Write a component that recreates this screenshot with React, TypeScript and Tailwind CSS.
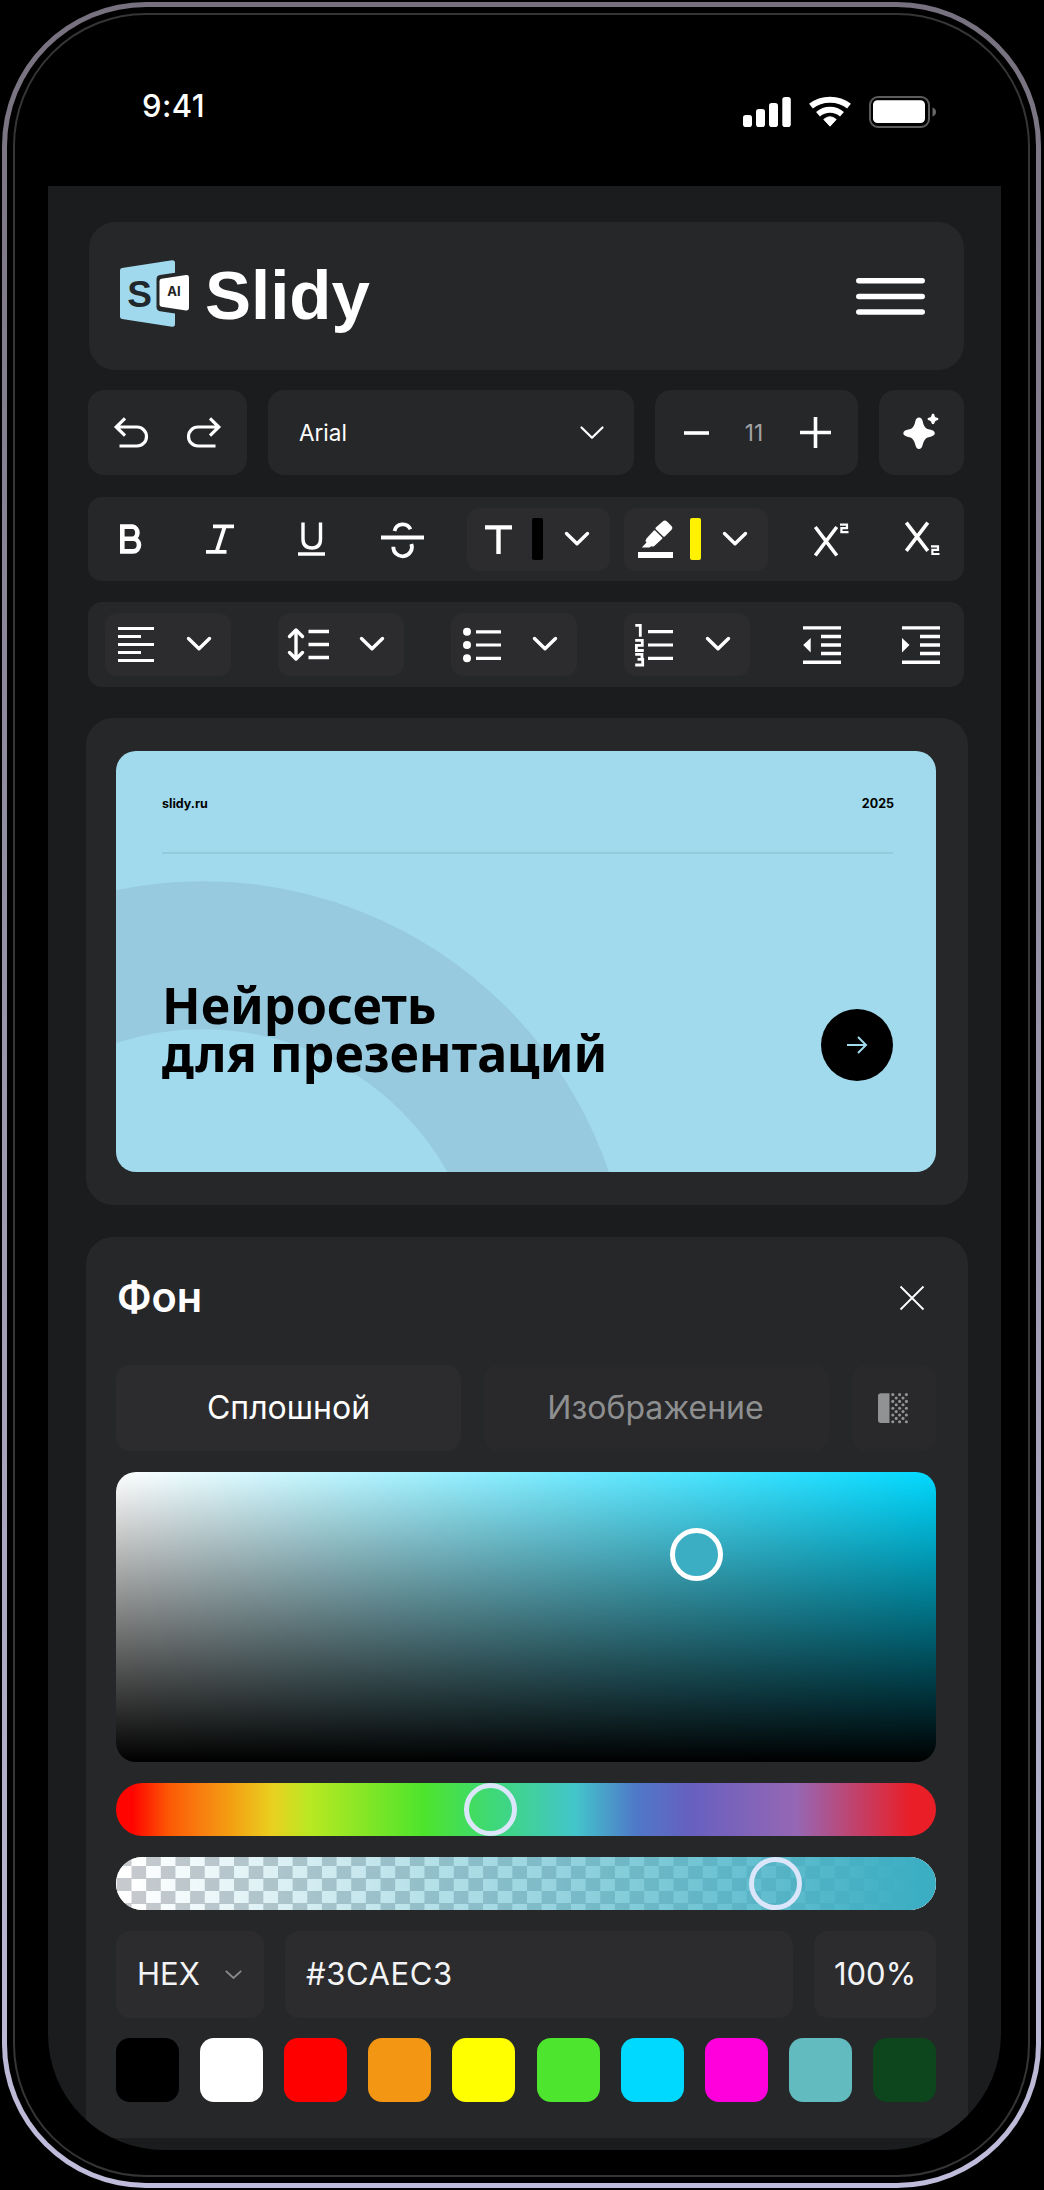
import type { ReactNode } from "react";

type GlyphProps = { w: number; h: number; sw?: number; className?: string; children: ReactNode };

function Glyph({ w, h, sw = 3, className = "", children }: GlyphProps) {
  return (
    <svg
      width={w}
      height={h}
      viewBox={`0 0 ${w} ${h}`}
      fill="none"
      stroke="currentColor"
      strokeWidth={sw}
      className={`block shrink-0 overflow-visible ${className}`}
    >
      {children}
    </svg>
  );
}

function Chevron({ sw = 3.4, className = "" }: { sw?: number; className?: string }) {
  return (
    <Glyph w={24} h={14} sw={sw} className={className}>
      <path d="M1.5 1.5L12 11.8L22.5 1.5" strokeLinecap="round" strokeLinejoin="round" />
    </Glyph>
  );
}

function StatusBar() {
  return (
    <div className="flex h-[171px] items-start pl-[127px] pt-[80px]">
      <span className="-mt-[7px] w-[65px] whitespace-nowrap text-[31px] leading-[36px] font-medium tracking-[0.4px]">9:41</span>
      <div className="ml-[536px] flex items-start">
        <Glyph w={48} h={31} sw={0} className="mt-[2px]">
          <g fill="currentColor">
            <rect x="0" y="18" width="9" height="12" rx="2.8" />
            <rect x="13" y="12" width="9" height="18" rx="2.8" />
            <rect x="26" y="6" width="9" height="24" rx="2.8" />
            <rect x="39.3" y="0" width="8.5" height="30" rx="2.8" />
          </g>
        </Glyph>
        <Glyph w={42} h={30} sw={6} className="ml-[18px] mt-[2px]">
          <path d="M2 9.2C12.6 .6 29.4 .6 40 9.2" />
          <path d="M9 17.2C16 11.2 26 11.2 33 17.2" />
          <path d="M14.8 22.4Q21 17.2 27.2 22.4L21 29.2Z" fill="currentColor" strokeWidth="1" strokeLinejoin="round" />
        </Glyph>
        <Glyph w={68} h={32} sw={2} className="ml-[18px] mt-px">
          <rect x="1" y="1" width="59" height="30" rx="8" stroke="#5c5c5c" />
          <rect x="4" y="4.3" width="52" height="22.7" rx="4.5" fill="white" stroke="none" />
          <path d="M63.5 11.3Q67 13 67 16Q67 19 63.5 20.7Z" fill="#666" stroke="none" />
        </Glyph>
      </div>
    </div>
  );
}

function Logo() {
  return (
    <div className="flex items-start">
      <svg width="69" height="67" viewBox="0 0 69 67" className="mt-[38px] block">
        <path d="M2 8L52 .2Q55 0 55 2.8V12.8L40 15Q36.5 15.7 36.5 19V47Q36.5 50.5 40 51.3L55 53.5V64Q55 67 52 66.7L2 59Q0 58.6 0 56.5V10.5Q0 8.4 2 8Z" fill="#a0d9ed" />
        <path d="M41.5 18.7L66 15.1Q69 14.7 69 17.5V48Q69 50.8 66 50.4L41.5 46.8Q39.5 46.5 39.5 44.3V21.3Q39.5 19 41.5 18.7Z" fill="#fff" />
        <text x="7.2" y="47.3" fontSize="37" fontWeight="700" fill="#20282c" fontFamily="Liberation Sans, sans-serif">S</text>
        <text x="54" y="35.8" fontSize="13" fontWeight="700" fill="#222" fontFamily="Inter, sans-serif" textAnchor="middle">AI</text>
      </svg>
      <span className="ml-[16px] mt-[35px] font-['Liberation_Sans',sans-serif] text-[69px] leading-[78px] font-bold">Slidy</span>
    </div>
  );
}

function TopRow() {
  return (
    <div className="ml-[40px] mt-[20px] flex h-[85px] w-[876px] gap-[21px]">
      <div className="flex w-[159px] items-start rounded-[16px] bg-[#262729] pl-[26px] pt-[27px]">
        <Glyph w={34} h={31} sw={3.2}>
          <path d="M11 1.4L2.2 10L11 18.6M2.5 10H23A9.5 9.5 0 0 1 23 29H5.5" />
        </Glyph>
        <Glyph w={34} h={31} sw={3.2} className="ml-[39px]">
          <path d="M23 1.4L31.8 10L23 18.6M31.5 10H11A9.5 9.5 0 0 0 11 29H28.5" />
        </Glyph>
      </div>
      <div className="flex w-[366px] items-center rounded-[16px] bg-[#262729] pl-[31px] pr-[30px]">
        <span className="flex-1 text-[22.5px]">Arial</span>
        <Chevron sw={2.2} />
      </div>
      <div className="flex w-[203px] items-center rounded-[16px] bg-[#262729] pl-[29px]">
        <Glyph w={25} h={4} sw={3.6}>
          <path d="M0 2H25" />
        </Glyph>
        <span className="ml-[34px] w-[22px] text-center text-[22.5px] text-[#a3a3a5]">11</span>
        <Glyph w={31} h={31} sw={3.6} className="ml-[35px]">
          <path d="M0 15.5H31M15.5 0V31" />
        </Glyph>
      </div>
      <div className="flex flex-1 items-start rounded-[16px] bg-[#262729] pl-[24px] pt-[23px]">
        <Glyph w={37} h={37} sw={0}>
          <g fill="currentColor">
            <path d="M16 4.5Q18.8 4.5 19.6 8Q20.8 14.6 24.5 16Q31.8 17 31.8 20.2Q31.8 23.3 24.5 24.5Q21 26 19.6 32Q18.7 36 16 36Q13.3 36 12.4 32Q11 26 7.5 24.5Q.3 23.3 .3 20.2Q.3 17 7.5 16Q11.2 14.6 12.4 8Q13.2 4.5 16 4.5Z" />
            <path d="M30 .5Q31.5 .5 31.8 3.4Q32.4 4.4 33.4 4.6Q35.5 4.8 35.5 6Q35.5 7.2 33.4 7.5Q32.4 7.8 31.8 9Q31.4 11.2 30 11.2Q28.6 11.2 28.2 9Q27.6 7.8 26.6 7.5Q24.5 7.2 24.5 6Q24.5 4.8 26.6 4.6Q27.6 4.4 28.2 3.4Q28.5 .5 30 .5Z" />
          </g>
        </Glyph>
      </div>
    </div>
  );
}

function FormatRow() {
  return (
    <div className="ml-[40px] mt-[22px] flex h-[84px] w-[876px] items-center rounded-[14px] bg-[#262729]">
      <Glyph w={22} h={30} sw={4.6} className="ml-[32px]">
        <path d="M2.3 2.6H12.5A6 6.2 0 0 1 12.5 14.8H2.3M2.3 14.8H13A6 6.3 0 0 1 13 27.4H2.3M2.3 .3V29.7" />
      </Glyph>
      <Glyph w={28} h={30} sw={3.8} className="ml-[64px]">
        <path d="M7 2.3H28M0 27.8H20.5M18.8 2.3L10.6 27.8" />
      </Glyph>
      <Glyph w={27} h={34} sw={3.4} className="ml-[64px]">
        <path d="M5 .5V17Q5 26 14 26Q22.5 26 22.5 17V.5M0 32H27" />
      </Glyph>
      <Glyph w={43} h={35} sw={3.8} className="ml-[56px]">
        <path d="M0 15.5H43M13.5 9A8.5 8.5 0 0 1 29.5 7.2M12.3 24.7A9.3 9.3 0 1 0 30.4 22" />
      </Glyph>
      <div className="ml-[43px] flex h-[63px] w-[143px] items-center rounded-[12px] bg-[#2c2c2e]">
        <Glyph w={27} h={29} sw={4.4} className="ml-[18px]">
          <path d="M0 2.4H27M13.5 2V29" />
        </Glyph>
        <div className="ml-[20px] h-[42px] w-[11px] rounded-[2px] bg-black" />
        <Chevron className="ml-[22px]" />
      </div>
      <div className="ml-[14px] flex h-[63px] w-[144px] items-center rounded-[12px] bg-[#2c2c2e]">
        <Glyph w={36} h={38} sw={0} className="ml-[14px]">
          <g fill="currentColor">
            <path d="M24.7 1.5Q26.8-.6 29 1.5L33.5 6Q35.3 8 33.3 10L26.8 16.5Q26 17.2 25.2 16.4L17.8 9.2Q17 8.4 17.8 7.6Z" />
            <path d="M15.9 10.5Q16.5 10 17.1 10.5L24.2 17.5Q24.8 18.1 24.2 18.8L16.3 26Q15 27 13.2 26.2L11.5 27.6H3.8L8.5 22.5Q6.8 20.5 8.5 18.5Z" />
            <rect x="0" y="32" width="35" height="6" />
          </g>
        </Glyph>
        <div className="ml-[16px] h-[42px] w-[11px] rounded-[2px] bg-[#fff200]" />
        <Chevron className="ml-[22px]" />
      </div>
      <Glyph w={36} h={34} sw={3.6} className="ml-[46px] mt-[2px]">
        <path d="M1.3 32.5L22.8 4M1.3 4L22.8 32.5" />
        <path d="M26 1.6H33V5.1H27.4V9.1H34.5" strokeWidth="2.2" />
      </Glyph>
      <Glyph w={36} h={34} sw={3.6} className="ml-[55px]">
        <path d="M1.3 28.9L22.8 .6M1.3 .6L22.8 28.9" />
        <path d="M26 24.4H33V27.9H27.4V32H34.5" strokeWidth="2.2" />
      </Glyph>
    </div>
  );
}

function Dropdown({ children, first = false }: { children: ReactNode; first?: boolean }) {
  return (
    <div className={`flex h-[63px] w-[126px] items-center rounded-[12px] bg-[#2c2c2e] ${first ? "ml-[17px]" : "ml-[47px]"}`}>
      <div className="flex w-[82px] justify-start pl-[12px]">{children}</div>
      <Chevron className="mb-[2px]" />
    </div>
  );
}

function ParagraphRow() {
  return (
    <div className="ml-[40px] mt-[21px] flex h-[85px] w-[876px] items-center rounded-[14px] bg-[#262729]">
      <Dropdown first>
        <Glyph w={36} h={37} sw={3.2} className="ml-px">
          <path d="M0 2.5H36M0 10.5H23M0 18.5H36M0 26.5H23M0 34.5H36" />
        </Glyph>
      </Dropdown>
      <Dropdown>
        <Glyph w={41} h={33} sw={3.4} className="-ml-[2px]">
          <path d="M8 2V31" />
          <path d="M1.5 8.5L8 2L14.5 8.5M1.5 24.5L8 31L14.5 24.5" strokeLinecap="round" strokeLinejoin="round" />
          <path d="M20.5 3.5H41M20.5 16.5H41M20.5 29.5H41" />
        </Glyph>
      </Dropdown>
      <Dropdown>
        <Glyph w={38} h={34} sw={3.2}>
          <g fill="currentColor" stroke="none">
            <circle cx="4" cy="3.8" r="4" />
            <circle cx="4" cy="17" r="4" />
            <circle cx="4" cy="30.3" r="4" />
          </g>
          <path d="M13 3.8H38M13 17H38M13 30.3H38" />
        </Glyph>
      </Dropdown>
      <Dropdown>
        <Glyph w={38} h={44} sw={3.2} className="-ml-px">
          <path d="M13 8.7H38M13 22H38M13 35.3H38" />
          <g strokeWidth="2.8">
            <path d="M.3 2.3H5.3V13.7" />
            <path d="M.2 17.3H7.3V22.3H1.4V27.5H8.8" />
            <path d="M.2 31.3H7V36.3H2.5M6.5 36.3H7.7V42H.2" />
          </g>
        </Glyph>
      </Dropdown>
      <Glyph w={38} h={38} sw={3.4} className="ml-[53px]">
        <path d="M0 1.9H38M18 10.5H38M18 19H38M18 27.5H38M0 36.2H38" />
        <path d="M7.7 12V26.5L.2 19Z" fill="currentColor" stroke="none" />
      </Glyph>
      <Glyph w={38} h={38} sw={3.4} className="ml-[61px]">
        <path d="M0 1.9H38M18 10.5H38M18 19H38M18 27.5H38M0 36.2H38" />
        <path d="M0 12V26.5L7.5 19Z" fill="currentColor" stroke="none" />
      </Glyph>
    </div>
  );
}

function SlidePreview() {
  return (
    <div className="ml-[38px] mt-[31px] h-[487px] w-[882px] rounded-[27px] bg-[#252729] px-[30px] pt-[33px]">
      <div className="relative h-[421px] w-[820px] overflow-hidden rounded-[20px] bg-[#a1daed] text-black">
        <svg className="absolute inset-0" width="820" height="421" viewBox="0 0 820 421">
          <circle cx="87" cy="559" r="354.7" fill="none" stroke="#98cadf" strokeWidth="148" />
        </svg>
        <div className="relative pl-[46px] pr-[43px] pt-[43px]">
          <div className="flex justify-between text-[12.5px] leading-[20px] font-bold">
            <span>slidy.ru</span>
            <span className="-mr-[1px]">2025</span>
          </div>
          <div className="mt-[38px] h-[2px] bg-[#95c9dc]" />
          <div className="mt-[127px] flex items-start justify-between">
            <h1 className="whitespace-nowrap font-['Noto_Sans',sans-serif] text-[50.2px] leading-[48px] font-bold">
              Нейросеть
              <br />
              для презентаций
            </h1>
            <button className="mt-[28px] flex h-[72px] w-[72px] items-center justify-center rounded-full bg-black text-[#a1daed]">
              <Glyph w={20} h={18} sw={2}>
                <path d="M0 9H19M11 1L19 9L11 17" />
              </Glyph>
            </button>
          </div>
        </div>
      </div>
    </div>
  );
}

function OpacityIcon() {
  const dots: [number, number][] = [];
  for (let r = 0; r < 9; r++) {
    for (let c = r % 2; c < 5; c += 2) dots.push([14.8 + c * 3.4, 1.6 + r * 3.4]);
  }
  return (
    <Glyph w={30} h={31} sw={0}>
      <path d="M3 .2H11.5V30H3Q0 30 0 27V3Q0 .2 3 .2Z" fill="#909294" />
      {dots.map(([x, y]) => (
        <circle key={`${x}-${y}`} cx={x} cy={y} r="1.55" fill="#929496" />
      ))}
    </Glyph>
  );
}

const swatches = [
  "bg-black",
  "bg-white",
  "bg-[#ff0000]",
  "bg-[#f39614]",
  "bg-[#ffff00]",
  "bg-[#4de52d]",
  "bg-[#00d9ff]",
  "bg-[#ff00dc]",
  "bg-[#62bbbf]",
  "bg-[#0d461d]",
];

function BackgroundPanel() {
  return (
    <div className="ml-[38px] mt-[32px] h-[901px] w-[882px] rounded-t-[27px] bg-[#262729] pl-[30px] pr-[32px]">
      <div className="flex h-[128px] items-start justify-between pl-px pt-[33px]">
        <h2 className="text-[41.5px] leading-[54px] font-semibold">Фон</h2>
        <Glyph w={24} h={24} sw={1.8} className="mr-[12px] mt-[16px]">
          <path d="M.5 .5L23.5 23.5M23.5 .5L.5 23.5" />
        </Glyph>
      </div>

      <div className="flex h-[86px] gap-[23px] text-[32px]">
        <div className="flex w-[345px] items-center justify-center rounded-[14px] bg-[#2c2c2e]">Сплошной</div>
        <div className="flex w-[345px] items-center justify-center rounded-[14px] bg-[#29292b] pr-[2px] text-[#8e8f90]">Изображение</div>
        <div className="flex w-[84px] items-center justify-center rounded-[14px] bg-[#29292b] pr-[2px]">
          <OpacityIcon />
        </div>
      </div>

      <div className="relative mt-[21px] h-[290px] rounded-[20px] bg-[linear-gradient(to_bottom,transparent,#000),linear-gradient(to_right,#fff,#00d9ff)]">
        <div className="absolute left-[554px] top-[56px] h-[53px] w-[53px] rounded-full border-[5px] border-white bg-[#3caec3]" />
      </div>

      <div className="relative mt-[21px] h-[53px] rounded-full bg-[linear-gradient(to_right,#ff0400_2%,#fc5a05_6.5%,#f88010_10.6%,#f39f12_14%,#eacf20_19%,#b9e822_23.6%,#4de42c_37.5%,#3ed975_45.6%,#43c5cb_56%,#4f78c8_63.5%,#6660c0_70%,#9667b4_83%,#ea1e27_97%)]">
        <div className="absolute left-[348px] top-0 h-[53px] w-[53px] rounded-full border-[5px] border-[#dbe6fa]" />
      </div>

      <div className="relative mt-[21px] h-[53px] overflow-hidden rounded-full bg-white">
        <div className="absolute inset-0 bg-[repeating-conic-gradient(#fff_0_25%,#c6c9cd_0_50%)] bg-size-[29.3px_25px] bg-position-[15.5px_9px]" />
        <div className="absolute inset-0 bg-[linear-gradient(to_right,rgba(60,174,195,0)_2%,rgba(60,174,195,1)_98%)]" />
        <div className="absolute left-[633px] top-0 h-[53px] w-[53px] rounded-full border-[5px] border-[#dbe6fa]" />
      </div>

      <div className="mt-[21px] flex h-[87px] gap-[21px] text-[31px] text-[#f4f4f6]">
        <div className="flex w-[148px] items-center rounded-[14px] bg-[#2c2c2e] pl-[21px]">
          <span className="w-[88px]">HEX</span>
          <Glyph w={17} h={9} sw={1.8} className="text-[#8b8b8d]">
            <path d="M.8 .8L8.5 8L16.2 .8" />
          </Glyph>
        </div>
        <div className="flex flex-1 items-center rounded-[14px] bg-[#2c2c2e] pl-[21px] tracking-[0.6px]">#3CAEC3</div>
        <div className="flex w-[122px] items-center justify-center rounded-[14px] bg-[#2c2c2e]">100%</div>
      </div>

      <div className="mt-[20px] flex justify-between">
        {swatches.map((color) => (
          <div key={color} className={`h-[64px] w-[63px] rounded-[14px] ${color}`} />
        ))}
      </div>
    </div>
  );
}

export default function App() {
  return (
    <div className="h-[2190px] w-[1044px] overflow-hidden bg-black p-[2px] font-['Inter',sans-serif] text-white">
      <div className="h-[2186px] w-[1039px] rounded-[144px] bg-linear-to-b from-[#77717f] to-[#bfbddb] p-[5px]">
        <div className="h-full rounded-[139px] bg-black p-[6px]">
          <div className="h-full rounded-[133px] border-2 border-[#353535]">
            <StatusBar />
            <main className="ml-[33px] h-[1964px] w-[953px] overflow-hidden rounded-b-[116px] bg-[#1b1c1d] pt-[36px]">
              <header className="ml-[41px] flex h-[148px] w-[875px] items-start justify-between rounded-[26px] bg-[#262729] pl-[31px] pr-[39px]">
                <Logo />
                <Glyph w={69} h={38} sw={5.5} className="mt-[56px]">
                  <path d="M2.8 2.8H66.2M2.8 18.4H66.2M2.8 33.9H66.2" strokeLinecap="round" />
                </Glyph>
              </header>
              <TopRow />
              <FormatRow />
              <ParagraphRow />
              <SlidePreview />
              <BackgroundPanel />
            </main>
          </div>
        </div>
      </div>
    </div>
  );
}
